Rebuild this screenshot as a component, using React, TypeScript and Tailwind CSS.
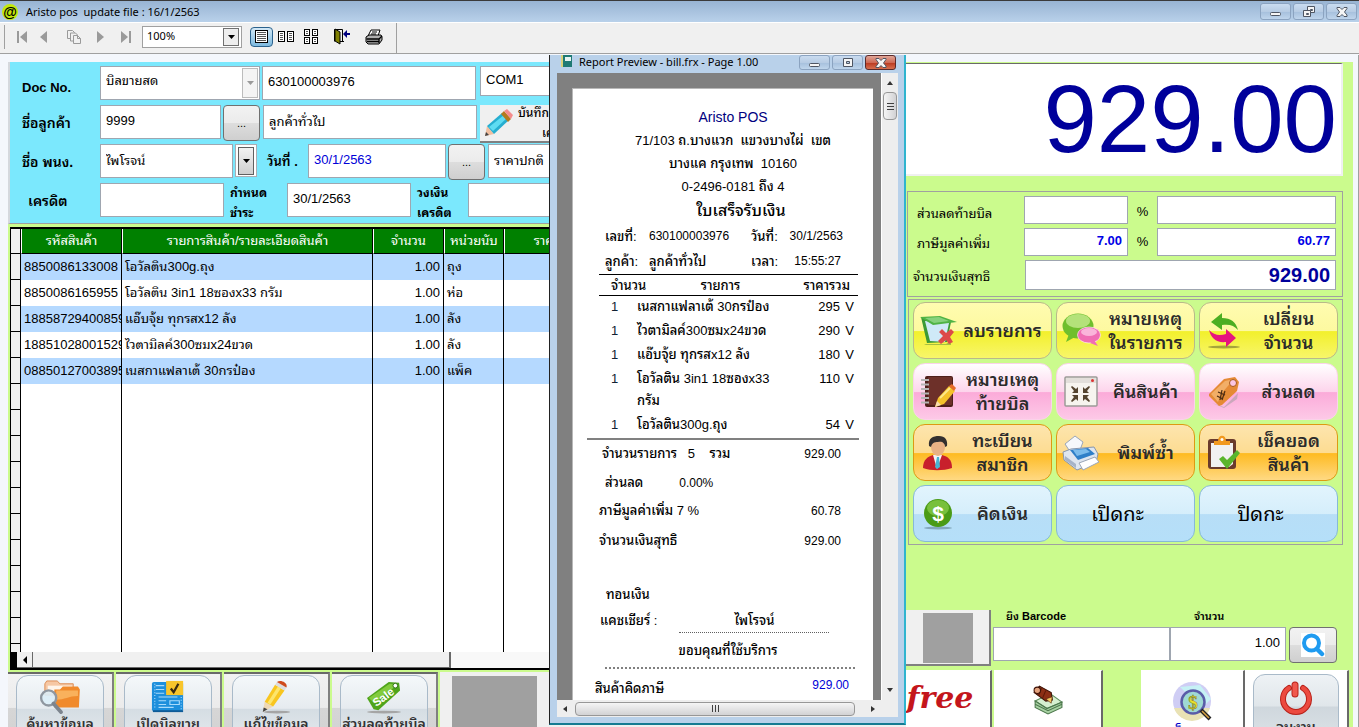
import React from 'react';

interface Item {
  code: string;
  name: string;
  qty: string;
  unit: string;
}

interface ReceiptLine {
  name: string;
  total: string;
}

interface ActionProps {
  lines: string[];
  tone: keyof typeof tones;
  icon?: React.ReactNode;
}

const items: Item[] = [
  { code: '8850086133008', name: 'โอวัลติน300g.ถุง', qty: '1.00', unit: 'ถุง' },
  { code: '8850086165955', name: 'โอวัลติน 3in1 18ซองx33 กรัม', qty: '1.00', unit: 'ห่อ' },
  { code: '18858729400859', name: 'แอ๊บจุ้ย ทุกรสx12 ลัง', qty: '1.00', unit: 'ลัง' },
  { code: '18851028001529', name: 'ไวตามิลค์300ซมx24ขวด', qty: '1.00', unit: 'ลัง' },
  { code: '08850127003895', name: 'เนสกาแฟลาเต้ 30กรป๋อง', qty: '1.00', unit: 'แพ็ค' },
];

const receiptLines: ReceiptLine[] = [
  { name: 'เนสกาแฟลาเต้ 30กรป๋อง', total: '295' },
  { name: 'ไวตามิลค์300ซมx24ขวด', total: '290' },
  { name: 'แอ๊บจุ้ย ทุกรสx12 ลัง', total: '180' },
  { name: 'โอวัลติน 3in1 18ซองx33 กรัม', total: '110' },
  { name: 'โอวัลติน300g.ถุง', total: '54' },
];

const tones = {
  yellow: 'border-[#b9b98a] bg-[linear-gradient(#fffcb0_0%,#fdf9a0_50%,#f2f02c_52%,#f8f66a_100%)]',
  pink: 'border-[#fbd3ea] bg-[linear-gradient(#ffffff_0%,#fdd5ec_50%,#fbabd9_52%,#fdc9e7_100%)]',
  orange: 'border-[#dd9a12] bg-[linear-gradient(#fde5ae_0%,#fddc92_50%,#febb22_52%,#ffd983_100%)]',
  blue: 'border-[#86b9d8] bg-[linear-gradient(#e2f4fd_0%,#d5eefb_50%,#b7def7_52%,#b5dff9_100%)]',
};

const field = 'border border-[#9fa6b0] bg-white px-[5px] text-[13px] leading-4 outline-none min-w-0';
const ellipsisBtn =
  'h-9 w-[37px] shrink-0 rounded-sm border border-[#707070] bg-[linear-gradient(#f2f2f2_0%,#ebebeb_50%,#dddddd_51%,#cfcfcf_100%)] text-[11px]';

/* ---------- icons ---------- */

const NavIcon = ({ flip, bar }: { flip?: boolean; bar?: boolean }) => (
  <svg width="12" height="12" viewBox="0 0 12 12" fill="#9a9a9a" className={flip ? 'rotate-180' : ''}>
    {bar && <path d="M0 0h2v12H0z" />}
    <path d="M10 0v12L3 6z" />
  </svg>
);

const PageGlyph = ({ x, y, w, h }: { x: number; y: number; w: number; h: number }) => (
  <g>
    <rect x={x + 0.5} y={y + 0.5} width={w} height={h} fill="#fff" stroke="#000" />
    {Array.from({ length: Math.floor((h - 1) / 2) }, (_, i) => (
      <path key={i} d={`M${x + 2} ${y + 2.5 + i * 2}h${w - 3}`} stroke="#555" strokeWidth="1" />
    ))}
  </g>
);

const CopyIcon = () => (
  <svg width="14" height="14" viewBox="0 0 14 14" fill="#f0f0f0" stroke="#9a9a9a">
    <path d="M.5.5h5l2 2v6h-7z" />
    <path d="M3.500 3h5l2 2v6h-7z" />
    <path d="M6.500 5.500h4l3 3v5h-7z M10.500 5.500v3h3" />
  </svg>
);

const DoorIcon = () => (
  <svg width="17" height="17" viewBox="0 0 17 17">
    <path d="M1.500 13.500V1.500h8v12" fill="none" stroke="#000" />
    <path d="M2 1l5 3v12l-5-3z" fill="#808000" stroke="#000" />
    <path d="M7 13.500h4" stroke="#000" />
    <path d="M10 6l4-4v3h3v2h-3v3z" fill="#000080" />
  </svg>
);

const PrinterIcon = () => (
  <svg width="18" height="16" viewBox="0 0 18 16">
    <path d="M6 1h9l-2 6H3z" fill="#fff" stroke="#000" />
    <path d="M7 3h5M6 5h5" stroke="#000" />
    <path d="M1 8l3-2h12l1 2v3l-3 4H3l-2-2z" fill="#b0b0b0" stroke="#000" />
    <path d="M1.500 10H14M2 12.500h12M14 14V10l3-3" stroke="#000" fill="none" strokeWidth="1.300" />
  </svg>
);

const PencilIcon = () => (
  <svg width="30" height="30" viewBox="0 0 30 30" className="shrink-0">
    <path d="M1 28l2-10 7 8z" fill="#f1bfa0" />
    <path d="M1 28l1-4 3 3z" fill="#444" />
    <path d="M3 18L18 5l7 7-15 14z" fill="#27aed0" />
    <path d="M5 19L20 7l3 3L9 23z" fill="#5fdcf2" />
    <path d="M17 6l3-3 7 8-3 3z" fill="#b47a1e" />
    <path d="M20 3l3-2 6 6-2 4z" fill="#f58c8c" />
  </svg>
);

const DeleteIcon = () => (
  <svg width="40" height="36" viewBox="0 0 40 36">
    <path d="M6 31h22l5-3v4H8z" fill="#5a8a3a" opacity=".5" />
    <path d="M3 4l6 26 20-1 4-20z" fill="#3c9a35" />
    <path d="M7 8l5 20 15 1 4-19z" fill="#cfe9f7" />
    <path d="M2 4l20-1 17 6-24 3z" fill="#4fb344" />
    <path d="M7 5l14-1 10 4-15 2z" fill="#86d17c" />
    <path d="M21 19l3-3 4 4 5-4 3 3-4 5 3 5-4 2-3-4-5 4-3-3 5-5z" fill="#dd4a4a" />
  </svg>
);

const ChatIcon = () => (
  <svg width="40" height="38" viewBox="0 0 40 38">
    <ellipse cx="17" cy="14" rx="15.500" ry="12.500" fill="#6fbf2d" />
    <path d="M8 22l-3 8 9-5z" fill="#6fbf2d" />
    <ellipse cx="17" cy="9" rx="12" ry="7" fill="#b4e27a" />
    <ellipse cx="28" cy="23" rx="11.500" ry="8" fill="#f06eb4" stroke="#fff" strokeWidth=".6" />
    <path d="M33 28l4 6-8-3z" fill="#f06eb4" />
    <ellipse cx="28" cy="20" rx="8" ry="4" fill="#fab5da" />
  </svg>
);

const SwapIcon = () => (
  <svg width="34" height="38" viewBox="0 0 34 38">
    <ellipse cx="17" cy="35" rx="16" ry="1.500" fill="#a5a53a" />
    <path d="M4 10L15 1v5c9 0 14 4 16 12-4-5-9-6-16-5v5z" fill="#4cae22" />
    <path d="M29 26L19 35v-5C9 31 4 26 2 18c5 5 10 6 17 4v-5z" fill="#e6157e" />
  </svg>
);

const NotebookIcon = () => (
  <svg width="36" height="36" viewBox="0 0 36 36">
    <rect x="5" y="2" width="28" height="31" rx="2" fill="#4d1f1a" />
    <rect x="8" y="3" width="24" height="28" rx="1" fill="#6d3029" />
    <path d="M1 6h8M1 10.500h8M1 15h8M1 19.500h8M1 24h8M1 28.500h8" stroke="#b5b5b5" strokeWidth="2" />
    <path d="M15 33l3-9L29 12l6 5-11 13z" fill="#f5c22b" />
    <path d="M29 12l3-2 4 4-2 3z" fill="#e56a2a" />
    <path d="M15 33l2-6 4 4z" fill="#f7dcb0" />
    <path d="M20 24L30 14" stroke="#fde98a" strokeWidth="2" />
  </svg>
);

const ShrinkIcon = () => (
  <svg width="34" height="32" viewBox="0 0 34 32">
    <rect x="1" y="1" width="32" height="29" rx="1" fill="#f7f4ef" stroke="#9c9a98" strokeWidth="1.500" />
    <path d="M2 2h30v5H2z" fill="#e3dfdb" />
    <circle cx="28.500" cy="4.500" r="1.500" fill="#d33" />
    <g fill="#54432f">
      <path d="M14 17v-6l-2 2-4-3-1 1 3 4-2 2z" />
      <path d="M19 17v-6l2 2 4-3 1 1-3 4 2 2z" />
      <path d="M14 19v6l-2-2-4 3-1-1 3-4-2-2z" />
      <path d="M19 19v6l2-2 4 3 1-1-3-4 2-2z" />
    </g>
  </svg>
);

const TagIcon = () => (
  <svg width="32" height="32" viewBox="0 0 32 32">
    <path d="M4 27l12 4 14-14-1 6-13 9z" fill="#999" opacity=".5" />
    <path d="M1 18L16 3l11-2 4 5-2 9-15 14-3 1L1 20z" fill="#e58a35" />
    <path d="M3 18L17 5l9-2-13 15-3 8z" fill="#f2ae67" />
    <circle cx="25" cy="7" r="3.500" fill="#fbc5e2" stroke="#a95a18" />
    <path d="M10 16l7 3M9 20l6 3M14 14l-2 10M17 15l-3 9" stroke="#4a2a12" strokeWidth="1.200" />
  </svg>
);

const MemberIcon = () => (
  <svg width="32" height="36" viewBox="0 0 32 36">
    <path d="M1 33c0-9 5-11 10-13h9c6 2 10 4 10 13-9 3-21 3-29 0z" fill="#c8202c" />
    <path d="M11 20l4 14 5-14z" fill="#f4f4f4" />
    <path d="M15 22l-2 10 2 2 3-2-1-10z" fill="#46b5d5" />
    <ellipse cx="16" cy="12" rx="7" ry="9" fill="#e9b285" />
    <path d="M7 11C6 3 11 1 17 1c6 0 9 4 8 10l-2 1c0-4-3-6-7-5-4 0-6 1-7 5z" fill="#33302f" />
  </svg>
);

const InkPrinterIcon = () => (
  <svg width="38" height="36" viewBox="0 0 38 36">
    <path d="M3 9l10-8 8 6-3 8-9 3z" fill="#f6f8fb" stroke="#9aa6b8" />
    <path d="M1 17l8-3 23-2 4 7-2 8-19 8L2 25z" fill="#dfe6f0" stroke="#8796ad" />
    <path d="M8 15l18-2 7 6-17 6z" fill="#2f7fc8" />
    <path d="M11 15l13-1 4 3-13 4z" fill="#7cbcec" />
    <path d="M17 28l16-6 4 5-16 8z" fill="#fff" stroke="#9aa6b8" />
    <path d="M3 21l11 8v4L3 25z" fill="#a6b3c8" />
  </svg>
);

const ClipboardIcon = () => (
  <svg width="34" height="36" viewBox="0 0 34 36">
    <rect x="1" y="4" width="28" height="30" rx="3" fill="#6a3b2c" />
    <path d="M4 8h22v21l-4 3H4z" fill="#f1f1f1" />
    <path d="M7 6h4c0-7 8-7 8 0h4v4H7z" fill="#f1991f" />
    <circle cx="15" cy="4.500" r="1.500" fill="#fff" />
    <path d="M12 24l4-3 4 4 10-10 3 3-13 16z" fill="#5ab52c" />
  </svg>
);

const CoinIcon = () => (
  <svg width="32" height="32" viewBox="0 0 32 32">
    <ellipse cx="16" cy="30" rx="14" ry="1.500" fill="#83a8bd" />
    <circle cx="16" cy="15" r="14" fill="#4a9b16" />
    <ellipse cx="16" cy="10" rx="11" ry="8" fill="#78c03c" />
    <text x="16" y="22.500" textAnchor="middle" fontSize="21" fontWeight="bold" fill="#fff" fontFamily="Liberation Sans">
      $
    </text>
  </svg>
);

const FolderIcon = () => (
  <svg width="44" height="34" viewBox="0 0 44 36">
    <path d="M6 4l2-3h11l3 3h14v12H6z" fill="#f6c8a4" stroke="#dc8a50" />
    <path d="M9 6h26v6H9z" fill="#fff5ea" />
    <path d="M16 10h6l3-3h16l2 3-1 19H16z" fill="#f08a2c" />
    <path d="M18 11h23v6c-10 0-14 4-23 4z" fill="#f9b15c" />
    <circle cx="10" cy="19" r="8" fill="#dcedf7" fillOpacity=".9" stroke="#8f97a0" strokeWidth="2.500" />
    <path d="M15 25l8 9" stroke="#7d858e" strokeWidth="4" strokeLinecap="round" />
  </svg>
);

const NewBillIcon = () => (
  <svg width="36" height="34" viewBox="0 0 36 36">
    <rect x="1" y="2" width="33" height="31" rx="2" fill="#1d8fdc" />
    <path d="M2 33h32" stroke="#0e5b97" strokeWidth="2" />
    <g stroke="#a9dbfb" fill="none" strokeWidth="1.200">
      <path d="M5 6h9M5 10h9M5 14h9M8 18h20M8 22h8M20 22h10v4H20zM8 26h8M8 29h16" />
      <path d="M4 4v27M32 18v13" strokeDasharray="1 2" />
    </g>
    <path d="M16 1h18v15H16z" fill="#f8c52c" />
    <path d="M21 9l3 4 5-9" fill="none" stroke="#3b2b10" strokeWidth="2.400" />
  </svg>
);

const EditIcon = () => (
  <svg width="34" height="34" viewBox="0 0 34 36">
    <ellipse cx="18" cy="34" rx="14" ry="1.500" fill="#a5a5a5" />
    <path d="M3 34l2-11 9 5z" fill="#efd9b4" />
    <path d="M3 34l1-5 4 2z" fill="#444" />
    <path d="M5 23L16 5l10 6-12 17z" fill="#f8c620" />
    <path d="M8 24L19 7l3 2-11 17z" fill="#fde56b" />
    <path d="M16 5l2-3 10 6-2 3z" fill="#ddd" />
    <path d="M18 2c4-3 12 1 10 6z" fill="#cf4a1c" />
  </svg>
);

const SaleIcon = () => (
  <svg width="40" height="34" viewBox="0 0 40 36">
    <ellipse cx="20" cy="34" rx="18" ry="1.500" fill="#a5a5a5" />
    <path d="M2 19L25 2l11 1 1 8-23 21-5-1z" fill="#4fa51b" />
    <path d="M4 19L26 4l8 1-24 20z" fill="#82cb3d" />
    <circle cx="32" cy="6" r="2.500" fill="#fff" stroke="#2c6d0d" />
    <text x="20" y="22" textAnchor="middle" fontSize="12" fontWeight="bold" fill="#fff" fontFamily="Liberation Sans" transform="rotate(-36 20 19)">
      Sale
    </text>
  </svg>
);

const NotesIcon = () => (
  <svg width="30" height="30" viewBox="0 0 28 28">
    <path d="M2 15l14-7 11 8-14 6z" fill="#d5efcf" stroke="#5a8a5a" />
    <path d="M2 15v6l12 6 13-6v-5l-14 6z" fill="#a9d3a4" stroke="#4c774c" />
    <path d="M2 18l12 6 13-6" stroke="#4c774c" fill="none" />
    <path d="M1 7l5-6 11 6 1 7-6 1z" fill="#8c2f14" stroke="#3d1206" />
    <path d="M8 3l-3 7M12 5l-3 7" stroke="#5e1a08" />
    <circle cx="4" cy="5" r="3" fill="#e4a27d" stroke="#3d1206" />
    <path d="M12 13l5 4 1-6z" fill="#f3c65c" stroke="#3d1206" strokeWidth=".5" />
  </svg>
);

const MoneySearchIcon = () => (
  <svg width="42" height="42" viewBox="0 0 42 42" className="shrink-0">
    <circle cx="21" cy="20" r="19" fill="#cfcdf4" />
    <path d="M3 27a19 19 0 0 0 36 0z" fill="#e9e2b4" />
    <path d="M9 6l20-2 11 14-9 9z" fill="#c6f1f5" />
    <circle cx="22" cy="21" r="11.500" fill="#9fd9d4" stroke="#5a5ca8" strokeWidth="2.500" />
    <text x="22" y="28" textAnchor="middle" fontSize="19" fontWeight="bold" fill="#e8e02c" stroke="#77721a" strokeWidth=".5" fontFamily="Liberation Serif">
      $
    </text>
    <path d="M30 29l9 9" stroke="#222" strokeWidth="4" />
    <path d="M31 30l7 7" stroke="#d9a441" strokeWidth="1.500" />
  </svg>
);

const PowerIcon = () => (
  <svg width="34" height="34" viewBox="0 0 34 34" fill="none" strokeLinecap="round" className="shrink-0">
    <path d="M10 7a13 13 0 1 0 14 0" stroke="#b8231b" strokeWidth="6" />
    <path d="M10 7a13 13 0 1 0 14 0" stroke="#ec4a3f" strokeWidth="4" />
    <path d="M16 4v9" stroke="#b8231b" strokeWidth="7" />
    <path d="M16 4v9" stroke="#f0584d" strokeWidth="5" />
  </svg>
);

/* ---------- shared pieces ---------- */

const WindowButton = ({ kind, size, active }: { kind: 'min' | 'max' | 'restore' | 'close'; size: string; active?: boolean }) => (
  <button
    aria-label={kind}
    className={`flex items-center justify-center rounded-[3px] border ${size} ${
      active
        ? 'border-[#5b2a2a] bg-[linear-gradient(#e0a698_0%,#cf6a55_50%,#b8371f_51%,#d8704f_100%)]'
        : 'border-[#8ba3c0] bg-[linear-gradient(#cadcf0_0%,#b7cce4_50%,#a5bfdc_51%,#bfd5ec_100%)]'
    }`}
  >
    <svg width="14" height="12" viewBox="0 0 14 12" fill="#f5f5f5" stroke="#4f5663">
      {kind === 'min' && <rect x="1.500" y="6.500" width="10" height="3" rx="1" />}
      {kind === 'max' && <path fillRule="evenodd" d="M2.500 1.500h9v8h-9z M5.500 4.500h3v2h-3z" />}
      {kind === 'restore' && (
        <>
          <path fillRule="evenodd" d="M5.500.5h7v6h-7z M8.500 3.500h2v1h-2z" />
          <path fillRule="evenodd" d="M1.500 4.500h7v6h-7z M4.500 7.500h2v1h-2z" />
        </>
      )}
      {kind === 'close' && <path d="M2 1.500h3l2 2 2-2h3v1L9.500 6l2.500 3v1.500H9l-2-2-2 2H2V9.500L4.500 6 2 2.500z" />}
    </svg>
  </button>
);

const ActionButton = ({ lines, tone, icon }: ActionProps) => (
  <button className={`flex h-[57px] items-center rounded-xl border pr-1 pl-1 ${tones[tone]}`}>
    {icon && <span className="flex w-10 shrink-0 justify-center">{icon}</span>}
    <span className={`flex-1 text-center leading-6 ${icon ? 'text-[18px] font-semibold text-[#2b2b2b]' : 'pr-4 text-[20px]'}`}>
      {lines.map((line) => (
        <span key={line} className="block whitespace-nowrap">
          {line}
        </span>
      ))}
    </span>
  </button>
);

const FooterButton = ({ label, icon }: { label: string; icon: React.ReactNode }) => (
  <button className="h-[90px] w-[106px] shrink-0 border-t-2 border-r-2 border-t-[#696969] border-r-[#808080] bg-[linear-gradient(#f2f2f2_0%,#ebebeb_38%,#d6d6d6_39%,#cfcfcf_100%)] px-2 pt-px">
    <span className="flex h-full flex-col items-center rounded-t-xl border border-[#a9bac9] bg-[linear-gradient(#f4f8fa_0%,#e6ebef_38%,#d5dde3_39%,#eef2f4_100%)] pt-1">
      {icon}
      <span className="text-[14px] leading-5 font-semibold whitespace-nowrap text-[#333]">{label}</span>
    </span>
  </button>
);

/* ---------- page sections ---------- */

const Toolbar = () => (
  <div className="flex h-[31px] shrink-0 items-center border-b border-[#a0a0a0] bg-[#f0f0f0]">
    <div className="flex h-full w-[397px] items-center border-r border-[#a0a0a0] pb-[3px] pl-1">
      <span className="h-6 w-px bg-[#a0a0a0]" />
      <button aria-label="first" className="ml-3"><NavIcon bar /></button>
      <button aria-label="previous" className="ml-2"><NavIcon /></button>
      <button aria-label="go to page" className="ml-[18px]"><CopyIcon /></button>
      <button aria-label="next" className="ml-[14px]"><NavIcon flip /></button>
      <button aria-label="last" className="ml-3"><NavIcon flip bar /></button>
      <div className="ml-[11px] flex h-[22px] w-[100px] items-center border border-[#a0a0a0] bg-white">
        <select aria-label="zoom" className="w-20 appearance-none pl-1 text-[11px] outline-none font-['Noto_Sans',sans-serif]">
          <option>100%</option>
        </select>
        <span className="flex h-[18px] w-4 items-center justify-center border border-[#707070] bg-[#eeeeee]">
          <svg width="7" height="4" viewBox="0 0 7 4"><path d="M0 0h7L3.500 4z" /></svg>
        </span>
      </div>
      <button aria-label="one page" className="ml-2 flex h-5 w-[23px] items-center justify-center rounded-sm border border-[#2b628d] bg-[linear-gradient(#d3e8f6,#7db9df)]">
        <svg width="13" height="13" viewBox="0 0 13 13"><PageGlyph x={0} y={0} w={12} h={12} /></svg>
      </button>
      <button aria-label="two pages" className="ml-[5px]">
        <svg width="17" height="12" viewBox="0 0 17 12">
          <PageGlyph x={0} y={0} w={6} h={10} />
          <PageGlyph x={9} y={0} w={6} h={10} />
        </svg>
      </button>
      <button aria-label="four pages" className="ml-[9px]">
        <svg width="15" height="16" viewBox="0 0 15 16">
          <PageGlyph x={0} y={0} w={5} h={6} />
          <PageGlyph x={8} y={0} w={5} h={6} />
          <PageGlyph x={0} y={8} w={5} h={6} />
          <PageGlyph x={8} y={8} w={5} h={6} />
        </svg>
      </button>
      <button aria-label="close preview" className="ml-[14px]"><DoorIcon /></button>
      <button aria-label="print" className="ml-[15px]"><PrinterIcon /></button>
    </div>
  </div>
);

const DocumentForm = () => (
  <form className="h-[162px] shrink-0 overflow-hidden border-b border-l-2 border-b-[#a0a0a0] border-l-[#d5d8dd] bg-[#7be8fd] pt-1 text-[13px] text-black">
    <div className="flex h-[39px] w-[640px] items-start">
      <label htmlFor="docType" className="w-[90px] shrink-0 pt-[14px] pl-3 leading-4 font-bold">Doc No.</label>
      <div className="flex h-[34px] w-40 border border-[#9fa6b0] bg-white p-px">
        <select id="docType" className="min-w-0 flex-1 appearance-none pb-1 pl-1 outline-none">
          <option>บิลขายสด</option>
        </select>
        <span className="flex w-4 items-center justify-center border border-[#bcbcbc] bg-[#f4f4f4]">
          <svg width="7" height="4" viewBox="0 0 7 4" fill="#9a9a9a"><path d="M0 0h7L3.500 4z" /></svg>
        </span>
      </div>
      <input aria-label="doc number" defaultValue="630100003976" className={`ml-0.5 h-[34px] w-[214px] pb-1 ${field}`} />
      <input aria-label="terminal" defaultValue="COM1" className={`ml-1 h-[30px] w-[120px] pb-1 ${field}`} />
    </div>
    <div className="flex h-[39px] w-[640px] items-start">
      <label htmlFor="customer" className="w-[90px] shrink-0 pt-2 pl-3 text-[14px] leading-5 font-semibold">ชื่อลูกค้า</label>
      <input id="customer" defaultValue="9999" className={`h-[34px] w-[121px] pb-1 ${field}`} />
      <button type="button" className={`ml-0.5 ${ellipsisBtn}`}>...</button>
      <input aria-label="customer name" defaultValue="ลูกค้าทั่วไป" className={`ml-[3px] h-[34px] w-[214px] pb-1 ${field}`} />
      <button type="button" className="ml-[3px] flex h-[38px] w-[120px] items-center border-r border-b-2 border-[#808080] bg-[#f0f0f0] pl-1">
        <PencilIcon />
        <span className="pl-1 text-left text-[12px] leading-5 font-medium whitespace-nowrap">
          <span className="block">บันทึกราย</span>
          <span className="block pl-6">เครดิต</span>
        </span>
      </button>
    </div>
    <div className="flex h-[39px] w-[640px] items-start">
      <label htmlFor="staff" className="w-[90px] shrink-0 pt-2 pl-3 text-[14px] leading-5 font-semibold">ชื่อ พนง.</label>
      <input id="staff" defaultValue="ไพโรจน์" className={`h-[34px] w-[133px] pb-1 ${field}`} />
      <button type="button" aria-label="choose staff" className="ml-0.5 flex h-[33px] w-[22px] shrink-0 items-center justify-center border border-[#abadb3] bg-white">
        <span className="flex h-7 w-4 items-center justify-center border border-[#606060] bg-[linear-gradient(#f2f2f2,#cfcfcf)]">
          <svg width="7" height="4" viewBox="0 0 7 4"><path d="M0 0h7L3.500 4z" /></svg>
        </span>
      </button>
      <label htmlFor="date" className="w-[51px] shrink-0 pt-2 pl-[10px] leading-5 font-semibold">วันที่ .</label>
      <input id="date" defaultValue="30/1/2563" className={`h-[34px] w-[138px] pb-1 text-[#0000d8] ${field}`} />
      <button type="button" className={`ml-0.5 ${ellipsisBtn}`}>...</button>
      <input aria-label="price level" defaultValue="ราคาปกติ" className={`ml-[3px] h-[34px] w-[120px] pb-1 ${field}`} />
    </div>
    <div className="flex h-[39px] w-[640px] items-start">
      <label htmlFor="credit" className="w-[90px] shrink-0 pt-2 pl-[18px] text-[14px] leading-5 font-semibold">เครดิต</label>
      <input id="credit" className={`h-[34px] w-[124px] ${field}`} />
      <label htmlFor="due" className="w-[63px] shrink-0 pl-[6px] text-[12px] leading-5 font-bold">กำหนด<br />ชำระ</label>
      <input id="due" defaultValue="30/1/2563" className={`h-[34px] w-[124px] pb-1 ${field}`} />
      <label htmlFor="limit" className="w-[57px] shrink-0 pl-[6px] text-[12px] leading-5 font-bold">วงเงิน<br />เครดิต</label>
      <input id="limit" className={`h-[34px] w-[120px] ${field}`} />
    </div>
  </form>
);

const headCell = 'border-r border-b border-black bg-[#008000] text-center font-normal whitespace-nowrap text-white border-l border-l-white';
const bodyCell = 'overflow-hidden border-r border-black whitespace-nowrap';

const ItemGrid = () => (
  <div className="mt-[3px] ml-0.5 flex min-h-0 flex-1 flex-col border-t-2 border-b-2 border-l border-black bg-white">
    <div className="min-h-0 flex-1 overflow-hidden">
      <table className="w-[612px] table-fixed border-separate border-spacing-0 text-[13px] leading-4">
        <colgroup>
          <col className="w-[10px]" />
          <col className="w-[101px]" />
          <col className="w-[251px]" />
          <col className="w-[71px]" />
          <col className="w-[60px]" />
          <col />
        </colgroup>
        <thead>
          <tr className="h-[25px]">
            <th className="border-r border-b border-black bg-[#f0f0f0]" />
            <th className={headCell}>รหัสสินค้า</th>
            <th className={headCell}>รายการสินค้า/รายละเอียดสินค้า</th>
            <th className={headCell}>จำนวน</th>
            <th className={headCell}>หน่วยนับ</th>
            <th className={headCell}>ราคา/หน่วย</th>
          </tr>
        </thead>
        <tbody>
          {items.map((item) => (
            <tr key={item.code} className="h-[26px] odd:bg-[#b5d9ff]">
              <td className="border-r border-b border-black bg-[#f0f0f0]" />
              <td className={`pl-[3px] ${bodyCell}`}>{item.code}</td>
              <td className={`pl-[3px] ${bodyCell}`}>{item.name}</td>
              <td className={`pr-[3px] text-right ${bodyCell}`}>{item.qty}</td>
              <td className={`pl-[3px] ${bodyCell}`}>{item.unit}</td>
              <td />
            </tr>
          ))}
          {Array.from({ length: 14 }, (_, i) => (
            <tr key={i} className="h-[26px]">
              <td className="border-r border-b border-black bg-[#f0f0f0]" />
              <td className={bodyCell} />
              <td className={bodyCell} />
              <td className={bodyCell} />
              <td className={bodyCell} />
              <td />
            </tr>
          ))}
        </tbody>
      </table>
    </div>
    <div className="flex h-4 shrink-0 border-l-[6px] border-black bg-[#f8f8f8]">
      <button aria-label="scroll left" className="flex w-4 items-center justify-center border-r border-b border-[#696969] bg-[#f0f0f0]">
        <svg width="4" height="8" viewBox="0 0 4 8"><path d="M4 0v8L0 4z" /></svg>
      </button>
      <div className="w-[418px] border-r-2 border-b border-[#696969] bg-[#f0f0f0]" />
    </div>
  </div>
);

const receiptRow = 'flex items-center justify-between';

const Receipt = () => (
  <article className="mt-[15px] mr-2 ml-[15px] w-[301px] border-t border-l border-[#b8b8b8] bg-white px-[14px] pt-[17px] text-[13px] font-medium text-black">
    <div className="pl-5 text-center leading-[23px]">
      <h1 className="text-[14px] font-medium text-[#000080]">Aristo POS</h1>
      <p>71/103 ถ.บางแวก&nbsp; แขวงบางไผ่&nbsp; เขต</p>
      <p>บางแค กรุงเทพ&nbsp; 10160</p>
      <p>0-2496-0181 ถึง 4</p>
    </div>
    <h2 className="pl-9 text-center text-[16px] leading-[26px] font-medium">ใบเสร็จรับเงิน</h2>
    <div className="grid grid-cols-[44px_102px_auto_1fr] pl-[18px] text-[13px] leading-[25px] whitespace-nowrap">
      <span>เลขที่:</span>
      <span className="text-[12px]">630100003976</span>
      <span>วันที่:</span>
      <span className="pr-4 text-right text-[12px]">30/1/2563</span>
      <span>ลูกค้า:</span>
      <span>ลูกค้าทั่วไป</span>
      <span>เวลา:</span>
      <span className="pr-[18px] text-right text-[12px]">15:55:27</span>
    </div>
    <table className="ml-3 w-[259px] table-fixed border-collapse">
      <colgroup>
        <col className="w-[38px]" />
        <col className="w-[147px]" />
        <col className="w-[56px]" />
        <col className="w-[18px]" />
      </colgroup>
      <thead>
        <tr className="h-[21px] border-y border-black whitespace-nowrap">
          <th className="pl-3 text-left leading-[19px] font-medium">จำนวน</th>
          <th className="pl-5 text-center leading-[19px] font-medium">รายการ</th>
          <th colSpan={2} className="pr-2 text-right leading-[19px] font-medium">ราคารวม</th>
        </tr>
      </thead>
      <tbody>
        {receiptLines.map((line) => (
          <tr key={line.name} className="h-6 align-top leading-[22px]">
            <td className="pb-0.5 pl-3 text-[#123]">1</td>
            <td className="pb-0.5">{line.name}</td>
            <td className="pb-0.5 text-right">{line.total}</td>
            <td className="pr-1 pb-0.5 text-right">V</td>
          </tr>
        ))}
      </tbody>
    </table>
    <hr className="border-t-2 border-[#808080]" />
    <p className={`h-7 pr-[18px] pl-[15px] ${receiptRow}`}>
      <span>จำนวนรายการ&nbsp;&nbsp; 5 &nbsp;&nbsp; รวม</span>
      <span className="text-[12px]">929.00</span>
    </p>
    <p className="flex h-[29px] items-center gap-9 pl-[18px]">
      <span>ส่วนลด</span>
      <span className="text-[12px]">0.00%</span>
    </p>
    <p className={`h-7 pr-[18px] pl-3 ${receiptRow}`}>
      <span>ภาษีมูลค่าเพิ่ม 7 %</span>
      <span className="text-[12px]">60.78</span>
    </p>
    <p className={`mb-6 h-8 pr-[18px] pl-3 ${receiptRow}`}>
      <span>จำนวนเงินสุทธิ</span>
      <span className="text-[12px]">929.00</span>
    </p>
    <p className="h-7 pl-[19px] leading-7">ทอนเงิน</p>
    <p className="flex h-6 items-end gap-[22px] pl-[13px] leading-6">
      <span>แคชเชียร์ :</span>
      <span className="w-[150px] shrink-0 border-b border-dotted border-[#606060] text-center leading-[23px]">ไพโรจน์</span>
    </p>
    <p className="mr-1 ml-[18px] h-9 border-b-2 border-dotted border-[#808080] pt-1 pr-1 text-center leading-7">ขอบคุณที่ใช้บริการ</p>
    <p className={`h-10 pr-[10px] pl-2 ${receiptRow}`}>
      <span>สินค้าคิดภาษี</span>
      <span className="pb-2 text-[12px] text-[#0000d8]">929.00</span>
    </p>
  </article>
);

const PreviewWindow = () => (
  <section className="flex min-h-0 flex-1 flex-col border-r-2 border-b-2 border-l border-r-[#2fb4cf] border-b-[#157b92] border-l-[#222] bg-[#b9d1ea] pr-[6px] pb-[6px] pl-[7px]">
    <header className="flex h-[18px] shrink-0 items-start justify-between">
      <div className="flex items-start gap-[6px] pl-[3px]">
        <svg width="13" height="13" viewBox="0 0 13 13">
          <path d="M1 0h11v12H1z" fill="#1f7a74" />
          <path d="M5 2h6v4H5z" fill="#e6f4f2" />
          <path d="M1 0h2v12H1z" fill="#d8d27a" />
        </svg>
        <h2 className="text-[11px] leading-[14px] whitespace-nowrap font-['Noto_Sans','Liberation_Sans',sans-serif]">Report Preview - bill.frx - Page 1.00</h2>
      </div>
      <div className="flex gap-0.5 pr-0.5">
        <WindowButton kind="min" size="h-[15px] w-[31px]" />
        <WindowButton kind="max" size="h-[15px] w-[31px]" />
        <WindowButton kind="close" size="h-[15px] w-[31px]" active />
      </div>
    </header>
    <div className="flex min-h-0 flex-1">
      <div className="min-w-0 flex-1 overflow-hidden bg-[#808080]">
        <Receipt />
      </div>
      <div className="flex w-[17px] shrink-0 flex-col items-center justify-between border-l border-white bg-[#eeeeee] py-2">
        <div className="flex flex-col items-center gap-[7px]">
          <svg width="6" height="4" viewBox="0 0 6 4"><path d="M3 0l3 4H0z" fill="#333" /></svg>
          <span className="flex h-7 w-[14px] flex-col items-center justify-center gap-0.5 rounded-sm border border-[#979797] bg-[linear-gradient(90deg,#f5f5f5,#d2d2d4)]">
            <span className="h-px w-[7px] bg-[#404040]" />
            <span className="h-px w-[7px] bg-[#404040]" />
            <span className="h-px w-[7px] bg-[#404040]" />
          </span>
        </div>
        <svg width="6" height="4" viewBox="0 0 6 4"><path d="M0 0h6L3 4z" fill="#333" /></svg>
      </div>
    </div>
    <div className="flex h-[17px] shrink-0 items-center bg-[#eeeeee] pr-[23px] pl-[6px]">
      <svg width="4" height="6" viewBox="0 0 4 6"><path d="M4 0v6L0 3z" fill="#333" /></svg>
      <span className="mr-4 ml-2 flex h-[14px] flex-1 items-center justify-center gap-0.5 rounded-sm border border-[#979797] bg-[linear-gradient(#f5f5f5,#d2d2d4)]">
        <span className="h-[7px] w-px bg-[#404040]" />
        <span className="h-[7px] w-px bg-[#404040]" />
        <span className="h-[7px] w-px bg-[#404040]" />
      </span>
      <svg width="4" height="6" viewBox="0 0 4 6"><path d="M0 0v6l4-3z" fill="#333" /></svg>
    </div>
  </section>
);

const Totals = () => (
  <fieldset className="mr-[10px] ml-px flex h-[106px] flex-col gap-1 border border-[#a0a0a0] py-1 pr-[6px] text-[13px]">
    <div className="flex h-7 items-center">
      <label htmlFor="discPct" className="flex-1 pt-2 pl-[9px]">ส่วนลดท้ายบิล</label>
      <input id="discPct" className={`h-7 w-[104px] ${field}`} />
      <span className="w-[29px] pt-1 text-center">%</span>
      <input aria-label="bill discount" className={`h-7 w-[179px] ${field}`} />
    </div>
    <div className="flex h-7 items-center">
      <label htmlFor="vatPct" className="flex-1 pt-1 pl-[9px]">ภาษีมูลค่าเพิ่ม</label>
      <input id="vatPct" defaultValue="7.00" className={`h-7 w-[104px] pb-1 text-right font-bold text-[#0000e6] ${field}`} />
      <span className="w-[29px] text-center">%</span>
      <input aria-label="vat" defaultValue="60.77" className={`h-7 w-[179px] pb-1 text-right font-bold text-[#0000e6] ${field}`} />
    </div>
    <div className="flex h-[30px] items-center">
      <label htmlFor="net" className="flex-1 pt-1 pl-[5px]">จำนวนเงินสุทธิ</label>
      <input id="net" defaultValue="929.00" className="h-[30px] w-[311px] border border-[#9fa6b0] bg-white px-[5px] text-right text-[20px] leading-6 font-bold text-[#00009b] outline-none" />
    </div>
  </fieldset>
);

const Actions = () => (
  <div className="mt-0.5 mr-[10px] ml-0.5 grid grid-cols-3 gap-1 border border-[#a0a0a0] px-1 py-0.5">
    <ActionButton tone="yellow" icon={<DeleteIcon />} lines={['ลบรายการ']} />
    <ActionButton tone="yellow" icon={<ChatIcon />} lines={['หมายเหตุ', 'ในรายการ']} />
    <ActionButton tone="yellow" icon={<SwapIcon />} lines={['เปลี่ยน', 'จำนวน']} />
    <ActionButton tone="pink" icon={<NotebookIcon />} lines={['หมายเหตุ', 'ท้ายบิล']} />
    <ActionButton tone="pink" icon={<ShrinkIcon />} lines={['คืนสินค้า']} />
    <ActionButton tone="pink" icon={<TagIcon />} lines={['ส่วนลด']} />
    <ActionButton tone="orange" icon={<MemberIcon />} lines={['ทะเบียน', 'สมาชิก']} />
    <ActionButton tone="orange" icon={<InkPrinterIcon />} lines={['พิมพ์ซ้ำ']} />
    <ActionButton tone="orange" icon={<ClipboardIcon />} lines={['เช็คยอด', 'สินค้า']} />
    <ActionButton tone="blue" icon={<CoinIcon />} lines={['คิดเงิน']} />
    <ActionButton tone="blue" lines={['เปิดกะ']} />
    <ActionButton tone="blue" lines={['ปิดกะ']} />
  </div>
);

const tile = 'flex h-[100px] flex-col items-center border-t border-r-2 border-t-white border-r-[#696969] bg-white';

const App: React.FC = () => (
  <div className="flex h-screen flex-col overflow-hidden bg-[#f4f7fc] font-['Liberation_Sans','Noto_Sans_Thai_Looped','Loma','Garuda','Noto_Sans',sans-serif] text-black">
    <header className="flex h-[23px] shrink-0 items-center justify-between border-t border-b border-t-[#3a3a3a] border-b-white bg-[linear-gradient(#98b4d3,#b9d1ea)] pr-0.5">
      <div className="flex items-center gap-2 pl-[2px]">
        <span className="flex h-4 w-4 items-center justify-center rounded-full bg-[#c3e80c] text-[14px] leading-4 font-bold">@</span>
        <h1 className="text-[11px] leading-4 whitespace-pre font-['Noto_Sans','Liberation_Sans',sans-serif]">Aristo pos  update file : 16/1/2563</h1>
      </div>
      <div className="flex gap-0.5">
        <WindowButton kind="min" size="h-[17px] w-[31px]" />
        <WindowButton kind="restore" size="h-[17px] w-[31px]" />
        <WindowButton kind="close" size="h-[17px] w-[31px]" />
      </div>
    </header>
    <Toolbar />

    <main className="grid min-h-0 flex-1 grid-cols-[minmax(0,1fr)_357px_453px] grid-rows-[minmax(0,1fr)] pt-px">
      <div className="flex min-h-0 min-w-0 flex-col pt-[7px] pl-2">
        <div className="flex min-h-0 flex-1 flex-col overflow-hidden bg-[#cbfb8d]">
          <DocumentForm />
          <ItemGrid />
          <div className="mt-[2px] flex h-[55px] shrink-0 gap-0.5">
            <FooterButton label="ค้นหาข้อมูล" icon={<FolderIcon />} />
            <FooterButton label="เปิดบิลขาย" icon={<NewBillIcon />} />
            <FooterButton label="แก้ไขข้อมูล" icon={<EditIcon />} />
            <FooterButton label="ส่วนลดท้ายบิล" icon={<SaleIcon />} />
            <div className="h-[90px] flex-1 bg-[#f0f0f0] px-3 pt-1">
              <div className="h-full bg-[#a0a0a0]" />
            </div>
          </div>
        </div>
      </div>

      <div className="flex min-h-0 flex-col">
        <PreviewWindow />
        <div className="h-0.5 bg-[#f0f0f0]" />
      </div>

      <div className="min-h-0 overflow-hidden border-r border-[#a0a0a0] pt-[7px] pr-[5px]">
        <div className="h-full bg-[#cbfb8d] pt-px">
          <output className="mr-[10px] block h-[113px] border-t border-r-2 border-b-2 border-t-[#696969] border-r-[#f0f0f0] border-b-[#f0f0f0] bg-white pr-1 text-right text-8xl leading-[110px] text-[#00009b]">
            929.00
          </output>
          <div className="h-[15px]" />
          <Totals />
          <Actions />

          <div className="mt-[65px] flex items-start">
            <div className="h-14 w-[85px] shrink-0 border-r-2 border-b-2 border-[#808080] bg-[#f0f0f0] pt-[3px] pl-[17px]">
              <div className="h-[50px] w-[50px] bg-[#a0a0a0]" />
            </div>
            <div className="ml-0.5 w-[177px] text-[11px] font-semibold">
              <label htmlFor="barcode" className="block h-[17px] pl-[13px] leading-3">ยิง Barcode</label>
              <input id="barcode" className={`h-[34px] w-full ${field}`} />
            </div>
            <div className="w-[116px] text-[11px] font-semibold">
              <label htmlFor="qty" className="block h-[17px] pl-6 leading-3">จำนวน</label>
              <input id="qty" defaultValue="1.00" className={`h-[34px] w-full pb-1 text-right font-normal ${field}`} />
            </div>
            <button aria-label="search" className="mt-[17px] ml-[3px] flex h-9 w-12 items-center justify-center rounded-sm border border-[#707070] bg-[linear-gradient(#f2f2f2_0%,#ebebeb_50%,#dddddd_51%,#cfcfcf_100%)]">
              <span className="flex h-6 w-6 items-center justify-center bg-white">
                <svg width="24" height="24" viewBox="0 0 24 24" fill="none" stroke="#1f9bf0">
                  <circle cx="10.500" cy="10" r="7.500" strokeWidth="4" />
                  <path d="M16 16l5 5" strokeWidth="4.500" strokeLinecap="round" />
                </svg>
              </span>
            </button>
          </div>

          <div className="mt-1 flex">
            <button className={`w-[86px] ${tile}`}>
              <span className="h-[54px] pr-4 text-[30px] leading-[54px] font-bold text-[#c4161c] italic font-['DejaVu_Serif',serif]">free</span>
              <span className="text-[14px] leading-4 font-bold text-[#087a08]">PLAN FOL</span>
            </button>
            <button aria-label="notes" className={`ml-0.5 w-[109px] pt-[14px] ${tile}`}>
              <NotesIcon />
            </button>
            <button className={`ml-[38px] w-[104px] pt-[10px] ${tile}`}>
              <MoneySearchIcon />
              <span className="text-[12px] leading-4 font-bold text-[#0000c8]">เช็คราคา</span>
            </button>
            <button className={`w-[104px] px-2 pt-[3px] ${tile}`}>
              <span className="flex h-full w-[86px] flex-col items-center rounded-t-xl border border-[#a9bac9] bg-[linear-gradient(#eef2f5_0%,#e0e6ea_33%,#cfd7dd_34%,#e8edf0_100%)] pt-[6px]">
                <PowerIcon />
                <span className="text-[14px] leading-6 font-semibold text-[#333]">จบงาน</span>
              </span>
            </button>
          </div>
        </div>
      </div>
    </main>
  </div>
);

export default App;
